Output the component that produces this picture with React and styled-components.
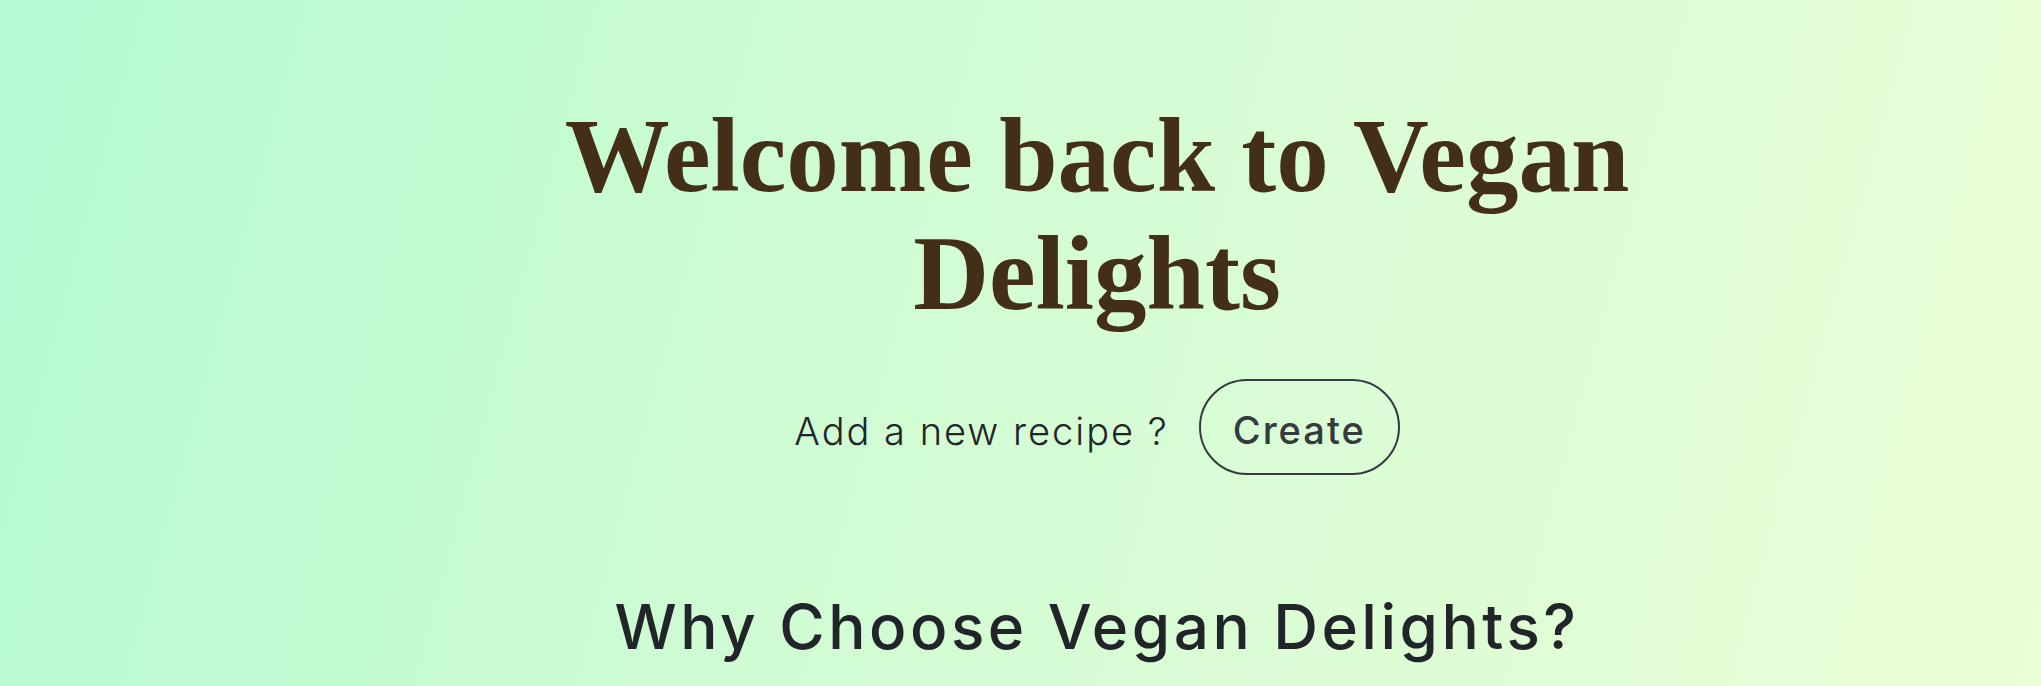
import React from "react";
import styled, { createGlobalStyle } from "styled-components";

const GlobalStyle = createGlobalStyle`
  html, body {
    margin: 0;
    padding: 0;
  }
  body {
    font-family: Inter, "Liberation Sans", sans-serif;
    overflow: hidden;
  }
`;

function App() {
  return (
    <>
      <GlobalStyle />
      <Page>
        <Hero>
          <Title>Welcome back to Vegan Delights</Title>
          <CreateRow>
            <Prompt>Add a new recipe ?</Prompt>
            <CreateButton type="button">Create</CreateButton>
          </CreateRow>
        </Hero>
        <SectionTitle>Why Choose Vegan Delights?</SectionTitle>
      </Page>
    </>
  );
}

export default App;

const Page = styled.main`
  width: 2041px;
  height: 686px;
  box-sizing: border-box;
  padding: 97px 0 0 153px;
  display: flex;
  flex-direction: column;
  align-items: center;
  background: linear-gradient(105deg, #b3fad2 0%, #d2fcd3 45%, #eafed7 100%);
`;

const Hero = styled.section`
  display: flex;
  flex-direction: column;
  align-items: center;
`;

const Title = styled.h1`
  margin: 0;
  width: 1120px;
  text-align: center;
  font-family: "Liberation Serif", serif;
  font-weight: 700;
  font-size: 105px;
  line-height: 118px;
  color: #432f17;
`;

const CreateRow = styled.div`
  display: flex;
  align-items: center;
  gap: 30px;
  margin-top: 46px;
`;

const Prompt = styled.span`
  font-family: Inter, "Liberation Sans", sans-serif;
  font-weight: 300;
  font-size: 38px;
  letter-spacing: 2px;
  color: #212529;
  padding-top: 8px;
`;

const CreateButton = styled.button`
  width: 201px;
  height: 96px;
  border: 2px solid #343a40;
  border-radius: 48px;
  background: transparent;
  color: #343a40;
  font-family: Inter, "Liberation Sans", sans-serif;
  font-weight: 500;
  font-size: 38px;
  letter-spacing: 2px;
  padding: 6px 0 0;
  cursor: pointer;
`;

const SectionTitle = styled.h2`
  margin: 115px 0 0;
  font-family: Inter, "Liberation Sans", sans-serif;
  font-weight: 500;
  font-size: 62px;
  letter-spacing: 3.5px;
  line-height: 1.2;
  color: #212529;
`;
